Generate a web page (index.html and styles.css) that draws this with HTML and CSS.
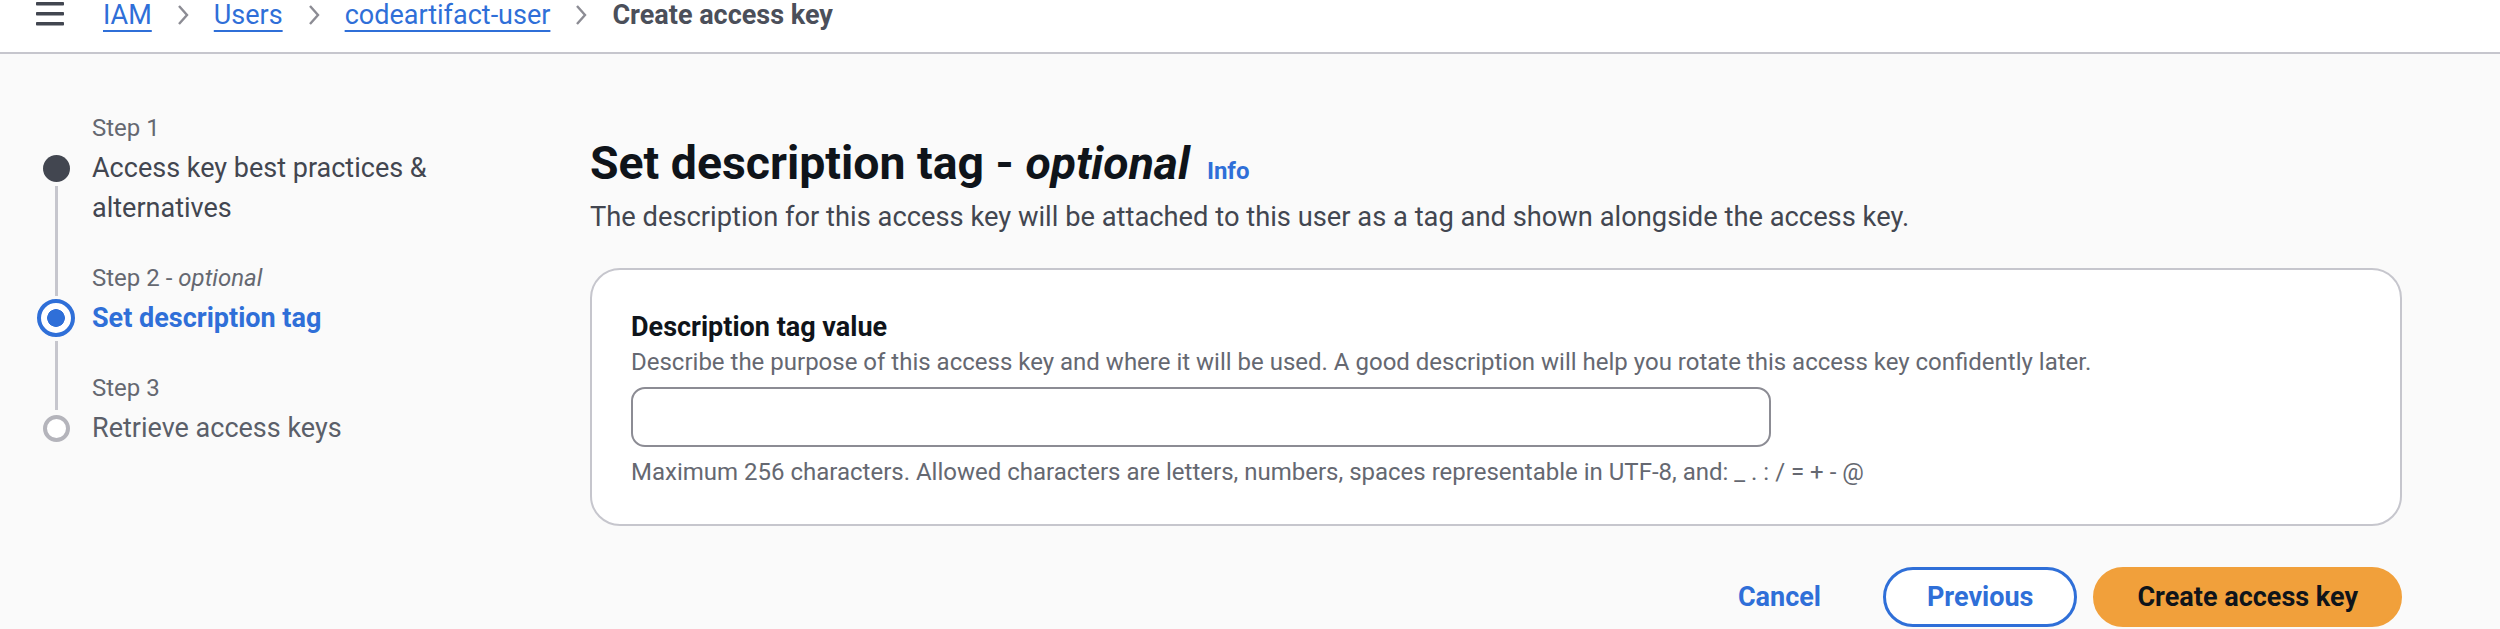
FILE: index.html
```html
<!DOCTYPE html>
<html lang="en">
<head>
<meta charset="utf-8">
<title>Create access key</title>
<link rel="stylesheet" href="styles.css">
</head>
<body>
<header class="topbar">
  <button class="menu" type="button" aria-label="Open navigation">
    <svg width="28" height="26" viewBox="0 0 28 26" aria-hidden="true">
      <rect x="0" y="2" width="28" height="3.6" rx="0.8"/>
      <rect x="0" y="12" width="28" height="3.6" rx="0.8"/>
      <rect x="0" y="22" width="28" height="3.6" rx="0.8"/>
    </svg>
  </button>
  <nav class="crumbs" aria-label="Breadcrumbs">
    <a href="#">IAM</a>
    <svg class="chev" width="12" height="22" viewBox="0 0 12 22" aria-hidden="true"><polyline points="2,2 10,11 2,20"/></svg>
    <a href="#">Users</a>
    <svg class="chev" width="12" height="22" viewBox="0 0 12 22" aria-hidden="true"><polyline points="2,2 10,11 2,20"/></svg>
    <a href="#">codeartifact-user</a>
    <svg class="chev" width="12" height="22" viewBox="0 0 12 22" aria-hidden="true"><polyline points="2,2 10,11 2,20"/></svg>
    <span class="current">Create access key</span>
  </nav>
</header>

<main class="layout">
  <ol class="steps">
    <li class="step">
      <span class="step-label">Step 1</span>
      <span class="marker"><span class="dot done"></span><span class="rail"></span></span>
      <span class="step-title done-title">Access key best practices &amp; alternatives</span>
    </li>
    <li class="step">
      <span class="rail-top"></span>
      <span class="step-label">Step 2 - <i>optional</i></span>
      <span class="marker"><span class="dot active"></span><span class="rail"></span></span>
      <span class="step-title active-title">Set description tag</span>
    </li>
    <li class="step step-last">
      <span class="rail-top"></span>
      <span class="step-label">Step 3</span>
      <span class="marker"><span class="dot pending"></span></span>
      <span class="step-title pending-title">Retrieve access keys</span>
    </li>
  </ol>

  <section class="content">
    <div class="page-head">
      <h1>Set description tag - <i>optional</i></h1>
      <a class="info" href="#">Info</a>
    </div>
    <p class="lead">The description for this access key will be attached to this user as a tag and shown alongside the access key.</p>

    <div class="card">
      <label class="field-label" for="tag">Description tag value</label>
      <p class="hint">Describe the purpose of this access key and where it will be used. A good description will help you rotate this access key confidently later.</p>
      <input class="input" id="tag" type="text">
      <p class="hint constraint">Maximum 256 characters. Allowed characters are letters, numbers, spaces representable in UTF-8, and: _ . : / = + - @</p>
    </div>

    <div class="actions">
      <button class="btn btn-link" type="button">Cancel</button>
      <button class="btn btn-normal" type="button">Previous</button>
      <button class="btn btn-primary" type="button">Create access key</button>
    </div>
  </section>
</main>
</body>
</html>
```

FILE: styles.css
```css
* { box-sizing: border-box; }

html, body {
  margin: 0;
  height: 100%;
  overflow: hidden;
}

body {
  background: #fafafa;
  font-family: Roboto, "Liberation Sans", Arial, sans-serif;
  font-size: 27px;
  line-height: 40px;
  color: #0f141a;
}

/* ---------- top bar ---------- */
.topbar {
  height: 54px;
  background: #fff;
  border-bottom: 2px solid #c6c6cd;
  display: flex;
  align-items: flex-start;
  padding-left: 36px;
}

.menu {
  border: 0;
  background: none;
  padding: 0;
  width: 28px;
  height: 26px;
  display: flex;
}

.menu svg { fill: #424650; }

.crumbs {
  display: flex;
  align-items: center;
  height: 30px;
  margin-left: 39px;
  line-height: 30px;
}

.crumbs a {
  color: #2f6fd8;
  text-decoration: underline;
  text-decoration-thickness: 2px;
  text-underline-offset: 6px;
}

.chev {
  margin: 0 25px;
  fill: none;
  stroke: #8c8c94;
  stroke-width: 2.4;
}

.crumbs .current {
  font-weight: 700;
  color: #4b4f5a;
}

/* ---------- layout ---------- */
.layout {
  display: grid;
  grid-template-columns: 470px 1fr;
  column-gap: 120px;
  padding-right: 98px;
}

/* ---------- steps ---------- */
.steps {
  list-style: none;
  margin: 0;
  padding: 58px 0 0 37px;
}

.step {
  display: grid;
  grid-template-columns: 38px 1fr;
  column-gap: 17px;
}

.step-label {
  grid-column: 2;
  grid-row: 1;
  font-size: 24px;
  line-height: 32px;
  color: #656871;
  margin-bottom: 4px;
}

.rail-top {
  grid-column: 1;
  grid-row: 1;
  justify-self: center;
  width: 3px;
  background: #c6c6cd;
  margin-bottom: 2px;
}

.step-last .rail-top { margin-bottom: -2px; }

.marker {
  grid-column: 1;
  grid-row: 2;
  display: flex;
  flex-direction: column;
  align-items: center;
}

.dot {
  flex: none;
  width: 27px;
  height: 27px;
  border-radius: 50%;
  margin-top: 6.5px;
}

.dot.done { background: #424650; }

.dot.active {
  width: 38px;
  height: 38px;
  margin-top: 1px;
  border: 4px solid #2f6fd8;
  background: radial-gradient(circle, #2f6fd8 0 8.5px, #fff 9.2px);
}

.dot.pending {
  border: 4px solid #b4b4bb;
  background: #fff;
}

.rail {
  flex: 1;
  width: 3px;
  margin-top: 4px;
  background: #c6c6cd;
}

.step-title {
  grid-column: 2;
  grid-row: 2;
  padding-bottom: 34px;
}

.step-last .step-title { padding-bottom: 0; }

.done-title { color: #424650; }
.active-title { color: #2f6fd8; font-weight: 700; }
.pending-title { color: #5b5f69; }

/* ---------- content ---------- */
.content { padding-top: 81px; }

.page-head {
  display: flex;
  align-items: baseline;
  gap: 17px;
}

h1 {
  margin: 0;
  font-size: 46.4px;
  line-height: 56px;
  font-weight: 700;
  color: #0f141a;
}

.info {
  font-size: 24px;
  font-weight: 700;
  color: #2f6fd8;
  text-decoration: none;
}

.lead {
  margin: 6px 0 0;
  font-size: 27.3px;
  color: #424650;
}

.card {
  margin-top: 31px;
  background: #fff;
  border: 2px solid #c6c6cd;
  border-radius: 30px;
  padding: 38px 39px 36px;
}

.field-label {
  display: block;
  font-weight: 700;
  line-height: 38px;
  color: #0f141a;
}

.hint {
  margin: 0;
  font-size: 24px;
  line-height: 32px;
  color: #656871;
}

.input {
  display: block;
  margin-top: 9px;
  width: 1140px;
  height: 60px;
  padding: 0 20px;
  border: 2px solid #8c8c94;
  border-radius: 14px;
  background: #fff;
  font: inherit;
}

.constraint { margin-top: 9px; }

/* ---------- actions ---------- */
.actions {
  margin-top: 41px;
  display: flex;
  justify-content: flex-end;
  align-items: center;
  gap: 16px;
}

.btn {
  height: 60px;
  padding: 0 41px;
  border: 3px solid transparent;
  border-radius: 30px;
  background: none;
  font: inherit;
  font-weight: 700;
  line-height: 1;
}

.btn-link {
  color: #2f6fd8;
  margin-right: 2px;
}

.btn-normal {
  color: #2f6fd8;
  border-color: #2f6fd8;
  background: #fff;
}

.btn-primary {
  background: #f1a03b;
  border-color: #f1a03b;
  color: #0f141a;
}
```
